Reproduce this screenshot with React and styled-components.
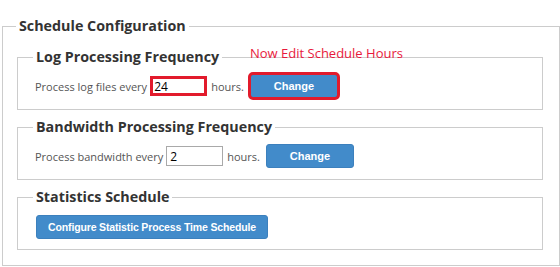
import React from "react";
import styled, { createGlobalStyle } from "styled-components";

const Global = createGlobalStyle`
  html, body { margin: 0; padding: 0; background: #fff; }
  body { font-family: "Open Sans", "Liberation Sans", sans-serif; }
`;

const Page = styled.div`
  padding: 16px 0 0 2px;
  width: 558px;
`;

const Outer = styled.fieldset`
  box-sizing: border-box;
  width: 558px;
  margin: 0;
  border: 1px solid #cccccc;
  padding: 11px 16px 15px 14px;
  min-width: 0;
  display: flex;
  flex-direction: column;
  gap: 7px;
`;

const Legend = styled.legend`
  font-family: "Open Sans", sans-serif;
  font-weight: 700;
  font-size: 14.3px;
  line-height: 20px;
  color: #333333;
  padding: 0 3px;
  margin-left: ${(p) => p.$ml || "-1px"};
`;

const Inner = styled.fieldset`
  box-sizing: border-box;
  position: relative;
  width: 526px;
  margin: 0;
  border: 1px solid #cccccc;
  padding: ${(p) => p.$pad || "7px 17px 11px 17px"};
  min-width: 0;
`;

const Row = styled.div`
  display: flex;
  align-items: center;
  height: 24px;
  font-family: "Open Sans", sans-serif;
  font-size: 11px;
  color: #555555;
`;

const Label = styled.span`
  white-space: nowrap;
`;

const HoursInput = styled.input`
  box-sizing: border-box;
  width: 57px;
  height: 20px;
  margin: 0 4px 0 3px;
  padding: 0 3px;
  border: 1px solid #a9a9a9;
  font-family: "Open Sans", sans-serif;
  font-size: 12px;
  color: #000;
  background: #fff;
  outline: ${(p) => (p.$marked ? "3px solid #e21b2c" : "none")};
  outline-offset: -3px;
`;

const Button = styled.button`
  box-sizing: border-box;
  height: ${(p) => p.$h || "24px"};
  width: ${(p) => p.$w || "auto"};
  margin-left: ${(p) => p.$ml || "0"};
  padding: 0 4px;
  background: #428bca;
  border: 1px solid #3c80bd;
  border-radius: 3px;
  color: #ffffff;
  font-family: "Liberation Sans", Arial, sans-serif;
  font-weight: 700;
  font-size: ${(p) => p.$fs || "11px"};
  letter-spacing: ${(p) => p.$ls || "0"};
  white-space: nowrap;
  cursor: pointer;
  outline: ${(p) => (p.$marked ? "3px solid #e21b2c" : "none")};
  outline-offset: -1px;
`;

const Annotation = styled.div`
  position: absolute;
  left: 232px;
  top: -23px;
  font-family: "Open Sans", sans-serif;
  font-size: 13px;
  line-height: 18px;
  color: #e8193c;
  white-space: nowrap;
`;

export default function App() {
  return (
    <>
      <Global />
      <Page>
        <Outer>
          <Legend>Schedule Configuration</Legend>
          <Inner>
            <Legend $ml="-2px">Log Processing Frequency</Legend>
            <Annotation>Now Edit Schedule Hours</Annotation>
            <Row>
              <Label>Process log files every</Label>
              <HoursInput $marked defaultValue="24" />
              <Label>hours.</Label>
              <Button $w="88px" $ml="6px" $marked>Change</Button>
            </Row>
          </Inner>
          <Inner>
            <Legend $ml="-2px">Bandwidth Processing Frequency</Legend>
            <Row>
              <Label>Process bandwidth every</Label>
              <HoursInput defaultValue="2" />
              <Label>hours.</Label>
              <Button $w="88px" $ml="6px">Change</Button>
            </Row>
          </Inner>
          <Inner $pad="8px 17px 10px 18px">
            <Legend $ml="-3px">Statistics Schedule</Legend>
            <Row>
              <Button $w="232px" $h="24px" $fs="10.5px" $ls="-0.15px">
                Configure Statistic Process Time Schedule
              </Button>
            </Row>
          </Inner>
        </Outer>
      </Page>
    </>
  );
}
